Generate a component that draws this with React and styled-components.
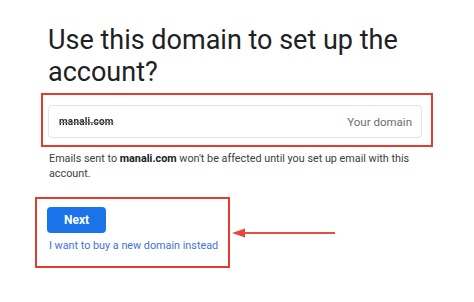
import React from "react";
import styled, { createGlobalStyle } from "styled-components";

const Global = createGlobalStyle`
  html, body { margin: 0; padding: 0; background: #ffffff; }
  body { font-family: Roboto, "Liberation Sans", Arial, sans-serif; }
`;

const Page = styled.div`
  width: 474px;
  height: 302px;
  box-sizing: border-box;
  padding-top: 24px;
  display: flex;
  flex-direction: column;
  align-items: flex-start;
  overflow: hidden;
`;

const Title = styled.h1`
  margin: 0 0 0 48px;
  font-family: Roboto, "Liberation Sans", sans-serif;
  font-weight: 400;
  font-size: 27px;
  line-height: 32px;
  color: #202124;
  width: 390px;
`;

const Highlight = styled.div`
  box-sizing: border-box;
  border: 2px solid #e23b30;
  margin-left: ${(p) => p.$left}px;
  margin-top: ${(p) => p.$top}px;
  width: ${(p) => p.$width}px;
  padding: ${(p) => p.$pad};
  display: flex;
  flex-direction: column;
  align-items: flex-start;
`;

const Field = styled.div`
  box-sizing: border-box;
  width: 374px;
  height: 33px;
  border: 1px solid #e3e4e6;
  border-radius: 4px;
  display: flex;
  align-items: center;
  justify-content: space-between;
  padding: 0 9px 0 10px;
`;

const Value = styled.span`
  font-size: 10px;
  font-weight: 700;
  color: #2a2a2a;
  letter-spacing: 0.2px;
  filter: blur(0.35px);
  text-decoration: line-through;
  text-decoration-color: #888;
`;

const Placeholder = styled.span`
  font-size: 11.5px;
  color: #6b6e72;
`;

const Helper = styled.p`
  margin: 4px 0 0 49px;
  font-size: 10.8px;
  line-height: 15px;
  color: #3c4043;
  width: 370px;
  b { font-weight: 700; color: #202124; }
`;

const ActionRow = styled.div`
  margin: 16px 0 0 35px;
  display: flex;
  align-items: center;
`;

const Button = styled.button`
  width: 59px;
  height: 26px;
  border: none;
  border-radius: 4px;
  background: #1a73e8;
  color: #ffffff;
  font-family: Roboto, "Liberation Sans", sans-serif;
  font-weight: 700;
  font-size: 12px;
  padding: 0;
  cursor: pointer;
`;

const Link = styled.a`
  margin: 5px 0 0 2px;
  font-size: 10.8px;
  line-height: 16px;
  color: #3f72dc;
  text-decoration: none;
  white-space: nowrap;
`;

const Arrow = styled.svg`
  display: block;
  margin-left: 2px;
`;

export default function App() {
  return (
    <>
      <Global />
      <Page>
        <Title>Use this domain to set up the account?</Title>
        <Highlight $left={41} $top={5} $width={392} $pad="10px 9px 7px 5px">
          <Field>
            <Value>manali.com</Value>
            <Placeholder>Your domain</Placeholder>
          </Field>
        </Highlight>
        <Helper>
          Emails sent to <b>manali.com</b> won't be affected until you set up email with this account.
        </Helper>
        <ActionRow>
          <Highlight $left={0} $top={0} $width={195} $pad="8px 10px 12px 10px">
            <Button>Next</Button>
            <Link href="#">I want to buy a new domain instead</Link>
          </Highlight>
          <Arrow width="104" height="12" viewBox="0 0 104 12">
            <polygon points="0,6 13,1.5 13,10.5" fill="#e4473a" />
            <rect x="11" y="5" width="92" height="2" fill="#e4503f" />
          </Arrow>
        </ActionRow>
      </Page>
    </>
  );
}
